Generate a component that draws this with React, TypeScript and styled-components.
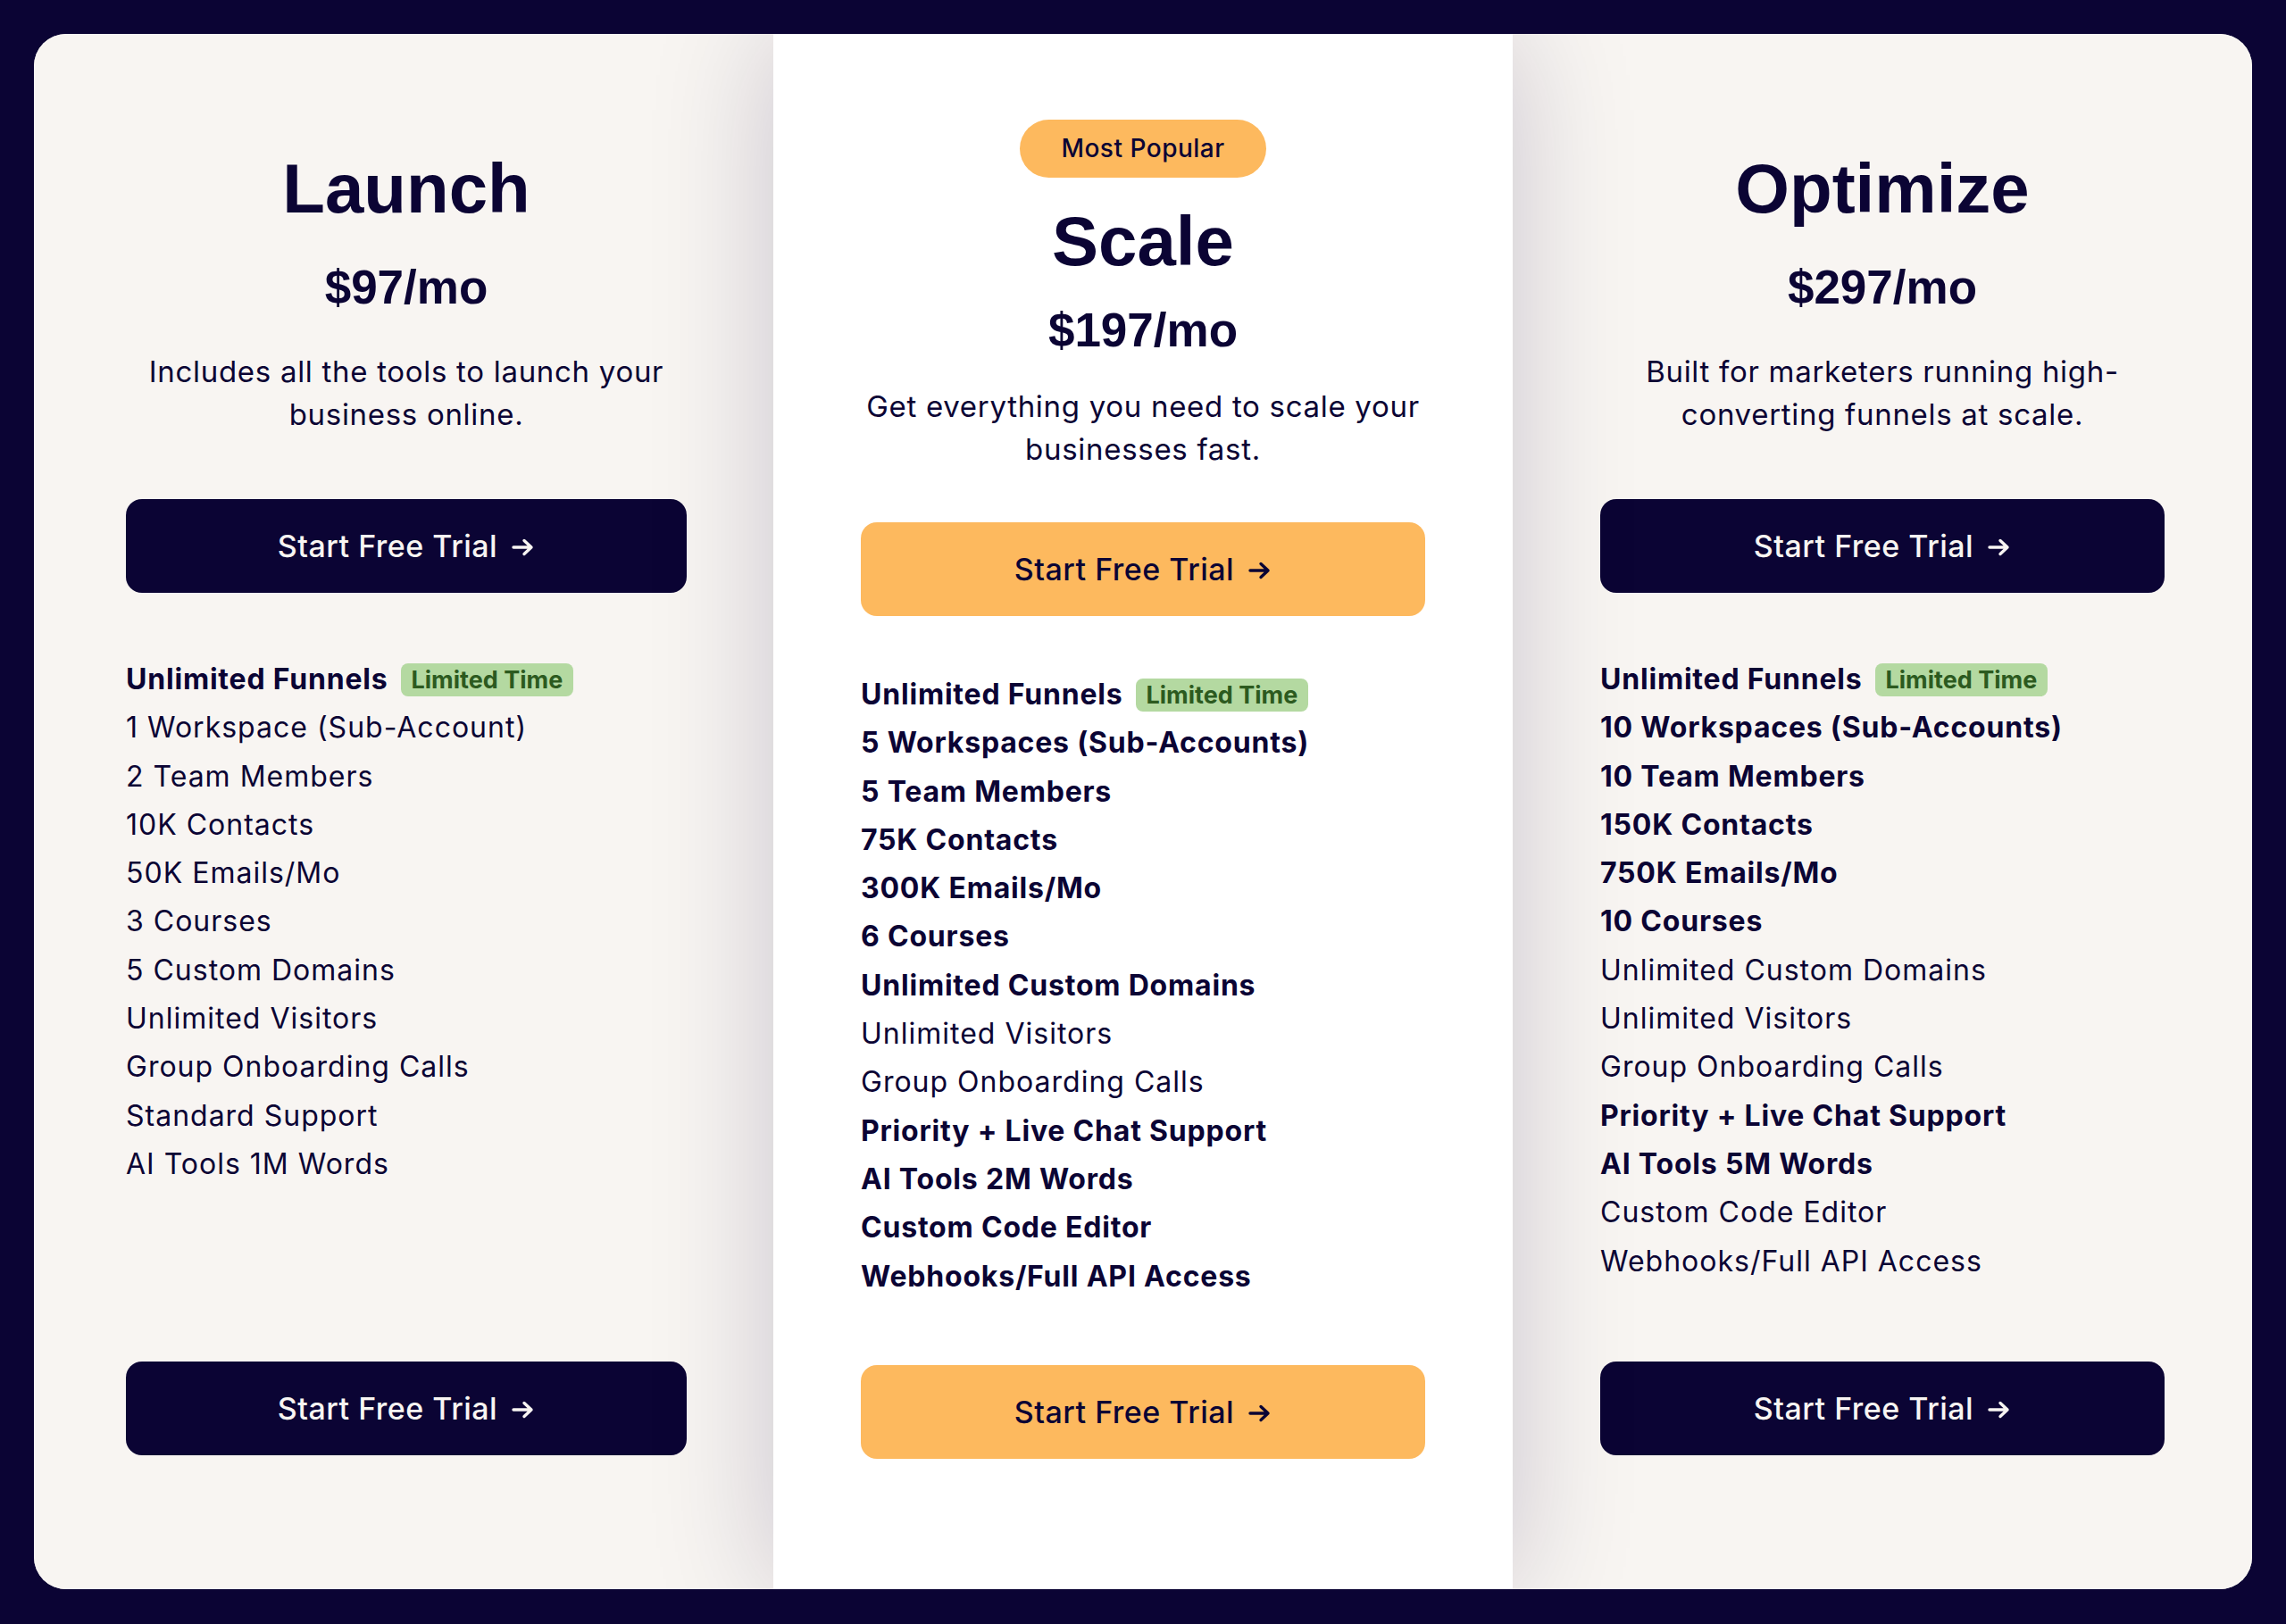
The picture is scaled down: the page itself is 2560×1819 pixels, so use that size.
import styled, { createGlobalStyle } from 'styled-components';

const Navy = '#0b0434';
const Cream = '#f8f5f2';
const Mango = '#fdb95e';

const GlobalStyle = createGlobalStyle`
  * { box-sizing: border-box; }
  body {
    margin: 0;
    background: ${Navy};
    font-family: Inter, "Noto Sans", sans-serif;
    color: ${Navy};
  }
`;

const Page = styled.div`
  padding: 38px;
`;

const Board = styled.div`
  display: grid;
  grid-template-columns: repeat(3, 1fr);
  height: 1742px;
  border-radius: 36px;
  overflow: hidden;
  background: ${Cream};
`;

const Column = styled.section<{ $featured?: boolean }>`
  display: flex;
  flex-direction: column;
  align-items: center;
  padding: ${(p) => (p.$featured ? '96px 98px 146px' : '133px 98px 150px')};
  background: ${(p) => (p.$featured ? '#ffffff' : Cream)};
  position: relative;
  z-index: ${(p) => (p.$featured ? 1 : 0)};
  box-shadow: ${(p) => (p.$featured ? '0 0 130px rgba(20, 10, 60, 0.2)' : 'none')};

  &:first-child {
    padding-left: 103px;
    padding-right: 97px;
  }
`;

const Badge = styled.div`
  height: 65px;
  padding: 0 46px;
  border-radius: 33px;
  background: ${Mango};
  font-size: 28px;
  line-height: 65px;
  letter-spacing: 0.5px;
  font-weight: 500;
  margin-bottom: 31px;
`;

const Title = styled.h2`
  margin: 0;
  font-family: "Liberation Sans", Arial, sans-serif;
  font-weight: 700;
  font-size: 78px;
  line-height: 80px;
`;

const Price = styled.div<{ $featured?: boolean }>`
  margin-top: ${(p) => (p.$featured ? '32px' : '43px')};
  font-family: "Liberation Sans", Arial, sans-serif;
  font-weight: 700;
  font-size: 53px;
  line-height: 56px;
`;

const Blurb = styled.p<{ $featured?: boolean }>`
  margin: ${(p) => (p.$featured ? '34px -6px 58px' : '43px -6px 71px')};
  font-size: 33px;
  line-height: 47.5px;
  letter-spacing: 0.7px;
  text-align: center;
`;

const Cta = styled.button<{ $featured?: boolean; $bottom?: boolean }>`
  width: 100%;
  height: 105px;
  flex-shrink: 0;
  display: flex;
  align-items: center;
  justify-content: center;
  gap: 16px;
  border: none;
  border-radius: 18px;
  background: ${(p) => (p.$featured ? Mango : Navy)};
  color: ${(p) => (p.$featured ? Navy : Cream)};
  font-family: inherit;
  font-size: 34px;
  letter-spacing: 0.5px;
  font-weight: 500;
  cursor: pointer;
  margin-top: ${(p) => (p.$bottom ? 'auto' : '0')};

  svg {
    margin-top: 2px;
  }
`;

const Features = styled.ul<{ $featured?: boolean }>`
  list-style: none;
  align-self: stretch;
  margin: ${(p) => (p.$featured ? '61px 0 0' : '70px 0 0')};
  padding: 0;
`;

const Feature = styled.li<{ $bold?: boolean }>`
  display: flex;
  align-items: center;
  font-size: 32px;
  line-height: 54.3px;
  letter-spacing: ${(p) => (p.$bold ? '0.8px' : '1px')};
  font-weight: ${(p) => (p.$bold ? 700 : 400)};
`;

const Tag = styled.span`
  margin-left: 14px;
  height: 37px;
  padding: 0 12px;
  border-radius: 8px;
  background: #b4d9a1;
  color: #2c5a1f;
  font-size: 27px;
  line-height: 37px;
  font-weight: 700;
  letter-spacing: 0;
`;

type Item = { text: string; bold?: boolean; tag?: string };

type Plan = {
  name: string;
  price: string;
  blurb: string;
  featured?: boolean;
  items: Item[];
};

const funnels: Item = { text: 'Unlimited Funnels', bold: true, tag: 'Limited Time' };

const plans: Plan[] = [
  {
    name: 'Launch',
    price: '$97/mo',
    blurb: 'Includes all the tools to launch your business online.',
    items: [
      funnels,
      { text: '1 Workspace (Sub-Account)' },
      { text: '2 Team Members' },
      { text: '10K Contacts' },
      { text: '50K Emails/Mo' },
      { text: '3 Courses' },
      { text: '5 Custom Domains' },
      { text: 'Unlimited Visitors' },
      { text: 'Group Onboarding Calls' },
      { text: 'Standard Support' },
      { text: 'AI Tools 1M Words' },
    ],
  },
  {
    name: 'Scale',
    price: '$197/mo',
    blurb: 'Get everything you need to scale your businesses fast.',
    featured: true,
    items: [
      funnels,
      { text: '5 Workspaces (Sub-Accounts)', bold: true },
      { text: '5 Team Members', bold: true },
      { text: '75K Contacts', bold: true },
      { text: '300K Emails/Mo', bold: true },
      { text: '6 Courses', bold: true },
      { text: 'Unlimited Custom Domains', bold: true },
      { text: 'Unlimited Visitors' },
      { text: 'Group Onboarding Calls' },
      { text: 'Priority + Live Chat Support', bold: true },
      { text: 'AI Tools 2M Words', bold: true },
      { text: 'Custom Code Editor', bold: true },
      { text: 'Webhooks/Full API Access', bold: true },
    ],
  },
  {
    name: 'Optimize',
    price: '$297/mo',
    blurb: 'Built for marketers running high-converting funnels at scale.',
    items: [
      funnels,
      { text: '10 Workspaces (Sub-Accounts)', bold: true },
      { text: '10 Team Members', bold: true },
      { text: '150K Contacts', bold: true },
      { text: '750K Emails/Mo', bold: true },
      { text: '10 Courses', bold: true },
      { text: 'Unlimited Custom Domains' },
      { text: 'Unlimited Visitors' },
      { text: 'Group Onboarding Calls' },
      { text: 'Priority + Live Chat Support', bold: true },
      { text: 'AI Tools 5M Words', bold: true },
      { text: 'Custom Code Editor' },
      { text: 'Webhooks/Full API Access' },
    ],
  },
];

// chunky arrow used in the trial buttons
function Arrow() {
  return (
    <svg width="26" height="22" viewBox="0 0 26 22" fill="none">
      <path
        d="M2 11h20M14 3.5l8 7.5-8 7.5"
        stroke="currentColor"
        strokeWidth="3.4"
        strokeLinecap="round"
        strokeLinejoin="round"
      />
    </svg>
  );
}

function TrialButton({ featured, bottom }: { featured?: boolean; bottom?: boolean }) {
  return (
    <Cta $featured={featured} $bottom={bottom}>
      Start Free Trial
      <Arrow />
    </Cta>
  );
}

function PlanColumn({ plan }: { plan: Plan }) {
  const f = plan.featured;
  return (
    <Column $featured={f}>
      {f && <Badge>Most Popular</Badge>}
      <Title>{plan.name}</Title>
      <Price $featured={f}>{plan.price}</Price>
      <Blurb $featured={f}>{plan.blurb}</Blurb>
      <TrialButton featured={f} />
      <Features $featured={f}>
        {plan.items.map((item) => (
          <Feature key={item.text} $bold={item.bold}>
            {item.text}
            {item.tag && <Tag>{item.tag}</Tag>}
          </Feature>
        ))}
      </Features>
      <TrialButton featured={f} bottom />
    </Column>
  );
}

export default function App() {
  return (
    <Page>
      <GlobalStyle />
      <Board>
        {plans.map((plan) => (
          <PlanColumn key={plan.name} plan={plan} />
        ))}
      </Board>
    </Page>
  );
}
